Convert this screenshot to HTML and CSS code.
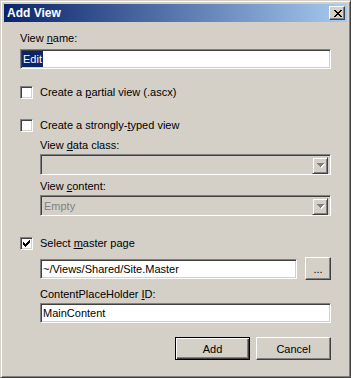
FILE: index.html
```html
<!DOCTYPE html>
<html lang="en">
<head>
    <meta charset="UTF-8">
    <title>Add View</title>
    <link rel="stylesheet" href="styles.css">
</head>
<body>
    <div class="window">
        <div class="titlebar">
            <span class="title">Add View</span>
            <button class="close-btn">
                <svg width="8" height="7" viewBox="0 0 8 7" shape-rendering="crispEdges">
                    <path fill="#000" d="M0 0h2v1h-2zM6 0h2v1h-2zM1 1h2v1h-2zM5 1h2v1h-2zM2 2h4v1h-4zM3 3h2v1h-2zM2 4h4v1h-4zM1 5h2v1h-2zM5 5h2v1h-2zM0 6h2v1h-2zM6 6h2v1h-2z"/>
                </svg>
            </button>
        </div>

        <div class="content">
            <div class="label">View <u>n</u>ame:</div>
            <div class="field name-field"><span class="selected">Edit</span></div>

            <div class="check-row row-partial">
                <span class="checkbox"></span>
                <span>Create a <u>p</u>artial view (.ascx)</span>
            </div>

            <div class="check-row row-typed">
                <span class="checkbox"></span>
                <span>Create a strongly-<u>t</u>yped view</span>
            </div>

            <div class="sub">
                <div class="label data-label">View <u>d</u>ata class:</div>
                <div class="combo">
                    <span class="combo-text"></span>
                    <span class="combo-btn">
                        <svg width="8" height="5" viewBox="0 0 8 5" shape-rendering="crispEdges">
                            <path fill="#fff" d="M1 1h7v1h-7zM2 2h5v1h-5zM3 3h3v1h-3zM4 4h1v1h-1z"/>
                            <path fill="#808080" d="M0 0h7v1h-7zM1 1h5v1h-5zM2 2h3v1h-3zM3 3h1v1h-1z"/>
                        </svg>
                    </span>
                </div>

                <div class="label content-label">View <u>c</u>ontent:</div>
                <div class="combo">
                    <span class="combo-text">Empty</span>
                    <span class="combo-btn">
                        <svg width="8" height="5" viewBox="0 0 8 5" shape-rendering="crispEdges">
                            <path fill="#fff" d="M1 1h7v1h-7zM2 2h5v1h-5zM3 3h3v1h-3zM4 4h1v1h-1z"/>
                            <path fill="#808080" d="M0 0h7v1h-7zM1 1h5v1h-5zM2 2h3v1h-3zM3 3h1v1h-1z"/>
                        </svg>
                    </span>
                </div>
            </div>

            <div class="check-row row-master">
                <span class="checkbox">
                    <svg width="7" height="7" viewBox="0 0 7 7" shape-rendering="crispEdges">
                        <path fill="#000" d="M6 0h1v1h-1zM5 1h2v1h-2zM0 2h1v1h-1zM4 2h3v1h-3zM0 3h2v1h-2zM3 3h3v1h-3zM0 4h5v1h-5zM1 5h3v1h-3zM2 6h1v1h-1z"/>
                    </svg>
                </span>
                <span>Select <u>m</u>aster page</span>
            </div>

            <div class="sub">
                <div class="master-row">
                    <div class="field master-field">~/Views/Shared/Site.Master</div>
                    <button class="btn browse-btn">...</button>
                </div>
                <div class="label holder-label">ContentPlaceHolder <u>I</u>D:</div>
                <div class="field holder-field">MainContent</div>
            </div>

            <div class="actions">
                <button class="btn default-btn">Add</button>
                <button class="btn">Cancel</button>
            </div>
        </div>
    </div>
</body>
</html>
```

FILE: styles.css
```css
* {
    margin: 0;
    padding: 0;
    box-sizing: border-box;
}

body {
    font-family: "Liberation Sans", Arial, sans-serif;
    font-size: 11px;
    color: #000;
    background: #fff;
}

u {
    text-decoration: underline;
    text-underline-offset: 1px;
}

.window {
    width: 351px;
    height: 378px;
    background: #d4d0c8;
    border: 1px solid;
    border-color: #d4d0c8 #404040 #404040 #d4d0c8;
    box-shadow: inset 1px 1px #fff, inset -1px -1px #808080;
    padding: 3px;
}

.titlebar {
    height: 18px;
    display: flex;
    align-items: center;
    justify-content: space-between;
    padding: 0 2px 0 3px;
    background: linear-gradient(to right, #0a246a, #a6caf0);
}

.title {
    color: #fff;
    font-weight: bold;
    font-size: 12px;
    line-height: 14px;
}

.close-btn {
    width: 16px;
    height: 14px;
    display: flex;
    align-items: center;
    justify-content: center;
    padding-left: 1px;
    background: #d4d0c8;
    border: 1px solid;
    border-color: #fff #404040 #404040 #fff;
    box-shadow: inset -1px -1px #808080;
}

.content {
    padding: 10px 16px 0;
    line-height: 13px;
}

.label {
    height: 13px;
}

.field {
    height: 20px;
    background: #fff;
    border: 1px solid;
    border-color: #808080 #fff #fff #808080;
    box-shadow: inset 1px 1px #404040, inset -1px -1px #d4d0c8;
    padding: 3px 2px 0 2px;
    white-space: nowrap;
}

.name-field {
    margin-top: 4px;
    padding-left: 1px;
    padding-top: 1px;
}

.selected {
    display: inline-block;
    background: #0a246a;
    color: #fff;
    padding: 2px 1px 1px 1px;
    line-height: 13px;
}

.check-row {
    display: flex;
    align-items: center;
    gap: 7px;
    height: 13px;
}

.row-partial {
    margin-top: 17px;
}

.row-typed {
    margin-top: 20px;
}

.row-master {
    margin-top: 21px;
}

.checkbox {
    width: 13px;
    height: 13px;
    flex: none;
    background: #fff;
    border: 1px solid;
    border-color: #808080 #fff #fff #808080;
    box-shadow: inset 1px 1px #404040, inset -1px -1px #d4d0c8;
    padding: 2px 0 0 2px;
    display: flex;
}

.sub {
    padding-left: 20px;
}

.data-label {
    margin-top: 7px;
}

.content-label {
    margin-top: 5px;
}

.combo {
    height: 21px;
    margin-top: 2px;
    display: flex;
    justify-content: space-between;
    background: #d4d0c8;
    border: 1px solid;
    border-color: #808080 #fff #fff #808080;
    box-shadow: inset 1px 1px #404040, inset -1px -1px #d4d0c8;
    padding: 2px;
}

.combo-text {
    color: #808080;
    padding: 2px 0 0 1px;
}

.combo-btn {
    width: 16px;
    height: 17px;
    display: flex;
    align-items: center;
    justify-content: center;
    padding-left: 1px;
    border: 1px solid;
    border-color: #d4d0c8 #404040 #404040 #d4d0c8;
    box-shadow: inset 1px 1px #fff, inset -1px -1px #808080;
}

.master-row {
    display: flex;
    align-items: center;
    justify-content: space-between;
    margin-top: 7px;
}

.master-field {
    width: 257px;
}

.btn {
    font-family: "Liberation Sans", Arial, sans-serif;
    font-size: 11px;
    color: #000;
    background: #d4d0c8;
    border: 1px solid;
    border-color: #fff #404040 #404040 #fff;
    box-shadow: inset -1px -1px #808080;
    height: 23px;
}

.browse-btn {
    width: 26px;
}

.holder-label {
    margin-top: 8px;
}

.holder-field {
    margin-top: 2px;
}

.actions {
    display: flex;
    justify-content: flex-end;
    gap: 6px;
    margin-top: 14px;
}

.actions .btn {
    width: 75px;
}

.default-btn {
    border-color: #000;
    box-shadow: inset 1px 1px #fff, inset -1px -1px #404040, inset -2px -2px #808080;
}
```
